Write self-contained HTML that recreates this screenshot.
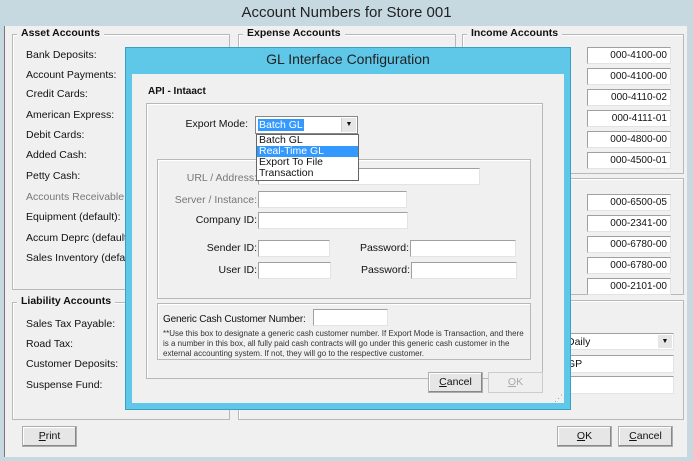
<!DOCTYPE html>
<html><head><meta charset="utf-8"><style>
*{box-sizing:border-box;margin:0;padding:0}
body{width:693px;height:461px;overflow:hidden;background:#c6d9e0;font-family:"Liberation Sans",sans-serif;font-size:10.5px;color:#111;position:relative}
.a{position:absolute;white-space:nowrap}
.g{position:absolute;border:1px solid #b8b8b8;box-shadow:inset 1px 1px 0 #fff}
.gt{position:absolute;background:#f0f0f0;font-weight:bold;padding:0 4px;top:-8px;left:4px;font-size:10.5px}
.in{position:absolute;background:#fff;border:1px solid #a0a0a0;border-right-color:#e3e3e3;border-bottom-color:#e3e3e3;height:17px}
.num{text-align:right;padding:2px 3px;font-size:10px}
.btn{position:absolute;height:21px;width:55px;background:#e6e6e6;border:1px solid #adadad;text-align:center;line-height:19px;box-shadow:inset -1px -1px 0 #888,inset 1px 1px 0 #fff}
.l{position:absolute;white-space:nowrap}
.r{position:absolute;white-space:nowrap;text-align:right}
</style></head><body>
<div class="a" style="left:4px;top:26px;width:683px;height:431px;background:#f0f0f0;border-left:1px solid #777"></div>
<div class="a" style="left:0;top:4px;width:693px;text-align:center;font-size:15px;color:#222">Account Numbers for Store 001</div>

<div class="g" style="left:12px;top:34px;width:218px;height:256px"><div class="gt">Asset Accounts</div></div>
<div class="g" style="left:238px;top:34px;width:218px;height:256px"><div class="gt">Expense Accounts</div></div>
<div class="g" style="left:462px;top:34px;width:222px;height:140px"><div class="gt">Income Accounts</div></div>
<div class="g" style="left:462px;top:178px;width:222px;height:117px"></div>
<div class="g" style="left:12px;top:302px;width:218px;height:118px"><div class="gt">Liability Accounts</div></div>
<div class="g" style="left:238px;top:300px;width:446px;height:120px"></div>

<div class="l" style="left:26px;top:49px">Bank Deposits:</div>
<div class="l" style="left:26px;top:69px">Account Payments:</div>
<div class="l" style="left:26px;top:88px">Credit Cards:</div>
<div class="l" style="left:26px;top:109px">American Express:</div>
<div class="l" style="left:26px;top:129px">Debit Cards:</div>
<div class="l" style="left:26px;top:149px">Added Cash:</div>
<div class="l" style="left:26px;top:170px">Petty Cash:</div>
<div class="l" style="left:26px;top:191px;color:#777">Accounts Receivable:</div>
<div class="l" style="left:26px;top:211px">Equipment (default):</div>
<div class="l" style="left:26px;top:232px">Accum Deprc (default):</div>
<div class="l" style="left:26px;top:252px">Sales Inventory (default</div>
<div class="l" style="left:26px;top:318px">Sales Tax Payable:</div>
<div class="l" style="left:26px;top:338px">Road Tax:</div>
<div class="l" style="left:26px;top:358px">Customer Deposits:</div>
<div class="l" style="left:26px;top:379px">Suspense Fund:</div>

<div class="in num" style="left:587px;top:47px;width:84px">000-4100-00</div>
<div class="in num" style="left:587px;top:68px;width:84px">000-4100-00</div>
<div class="in num" style="left:587px;top:89px;width:84px">000-4110-02</div>
<div class="in num" style="left:587px;top:110px;width:84px">000-4111-01</div>
<div class="in num" style="left:587px;top:131px;width:84px">000-4800-00</div>
<div class="in num" style="left:587px;top:152px;width:84px">000-4500-01</div>
<div class="in num" style="left:587px;top:194px;width:84px">000-6500-05</div>
<div class="in num" style="left:587px;top:215px;width:84px">000-2341-00</div>
<div class="in num" style="left:587px;top:236px;width:84px">000-6780-00</div>
<div class="in num" style="left:587px;top:257px;width:84px">000-6780-00</div>
<div class="in num" style="left:587px;top:278px;width:84px">000-2101-00</div>

<div class="in" style="left:560px;top:333px;width:114px;padding:2px 6px">Daily<span style="position:absolute;right:1px;top:1px;width:14px;height:13px;background:#e6e6e6;font-size:7px;text-align:center;line-height:13px">▼</span></div>
<div class="in" style="left:560px;top:355px;width:114px;padding:2px 6px;height:18px">GP</div>
<div class="in" style="left:560px;top:376px;width:114px;height:18px"></div>

<div class="btn" style="left:22px;top:426px"><u>P</u>rint</div>
<div class="btn" style="left:557px;top:426px"><u>O</u>K</div>
<div class="btn" style="left:618px;top:426px"><u>C</u>ancel</div>

<!-- dialog -->
<div class="a" style="left:125px;top:47px;width:446px;height:363px;background:#5fc8e8;border:1px solid #3a9fc0"></div>
<div class="a" style="left:125px;top:51px;width:446px;text-align:center;font-size:14px;color:#222">GL Interface Configuration</div>
<div class="a" style="left:132px;top:74px;width:432px;height:329px;background:#f0f0f0"></div>
<div class="l" style="left:148px;top:86px;font-weight:bold;font-size:10px">API - Intaact</div>
<div class="g" style="left:146px;top:103px;width:397px;height:276px"></div>
<div class="r" style="right:445px;top:118px">Export Mode:</div>
<div class="in" style="left:255px;top:116px;width:103px;height:18px;border:1px solid #888"><span style="position:absolute;left:2px;top:2px;background:#3399ff;color:#fff;padding:0 1px;line-height:12px">Batch GL</span><span style="position:absolute;right:1px;top:1px;width:15px;height:14px;background:#e6e6e6;border-left:1px solid #ccc;font-size:7px;text-align:center;line-height:14px">▼</span></div>
<div class="g" style="left:157px;top:159px;width:374px;height:140px"></div>
<div class="r" style="right:436px;top:172px;color:#777">URL / Address:</div>
<div class="in" style="left:258px;top:168px;width:222px"></div>
<div class="r" style="right:436px;top:194px;color:#777">Server / Instance:</div>
<div class="in" style="left:258px;top:191px;width:149px"></div>
<div class="r" style="right:436px;top:214px">Company ID:</div>
<div class="in" style="left:258px;top:212px;width:150px"></div>
<div class="r" style="right:436px;top:242px">Sender ID:</div>
<div class="in" style="left:258px;top:240px;width:72px"></div>
<div class="r" style="right:284px;top:242px">Password:</div>
<div class="in" style="left:410px;top:240px;width:106px"></div>
<div class="r" style="right:436px;top:264px">User ID:</div>
<div class="in" style="left:258px;top:262px;width:73px"></div>
<div class="r" style="right:283px;top:264px">Password:</div>
<div class="in" style="left:411px;top:262px;width:106px"></div>
<!-- dropdown list -->
<div class="a" style="left:256px;top:134px;width:103px;height:47px;background:#fff;border:1px solid #666;font-size:10.5px;line-height:11px">
<div style="padding-left:2px">Batch GL</div>
<div style="padding-left:2px;background:#3399ff;color:#fff">Real-Time GL</div>
<div style="padding-left:2px">Export To File</div>
<div style="padding-left:2px">Transaction</div></div>

<div class="g" style="left:157px;top:303px;width:374px;height:57px"></div>
<div class="l" style="left:163px;top:314px;font-size:10px;letter-spacing:-0.2px">Generic Cash Customer Number:</div>
<div class="in" style="left:313px;top:309px;width:75px"></div>
<div class="l" style="left:163px;top:329px;font-size:8px;line-height:10px;color:#333">**Use this box to designate a generic cash customer number. If Export Mode is Transaction, and there<br>is a number in this box, all fully paid cash contracts will go under this generic cash customer in the<br>external accounting system. If not, they will go to the respective customer.</div>
<div class="btn" style="left:428px;top:372px"><u>C</u>ancel</div>
<div class="btn" style="left:488px;top:372px;color:#aaa;background:#efefef;box-shadow:none;border-color:#ccc"><u>O</u>K</div>
<div class="l" style="left:554px;top:393px;color:#999;font-size:9px">⋰</div>
</body></html>
